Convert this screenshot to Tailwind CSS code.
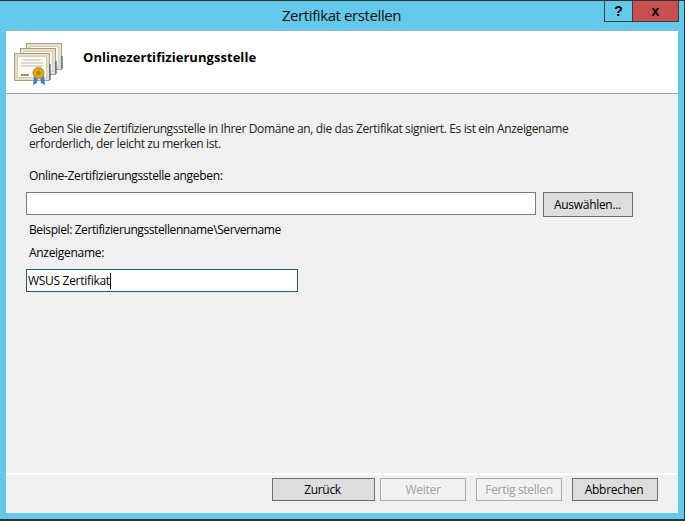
<!DOCTYPE html>
<html lang="de">
  <head>
    <meta charset="UTF-8" />
    <script src="https://cdn.jsdelivr.net/npm/@tailwindcss/browser@4"></script>
    <title>Zertifikat erstellen</title>
  </head>
  <body class="w-[685px] h-[521px] overflow-hidden bg-[#63c9ea] font-['Open_Sans','Liberation_Sans',sans-serif] text-[12px] leading-[16px] text-black">
    <div class="flex flex-col h-full border-t border-t-[#333] border-b-2 border-b-[#333] border-r border-r-[#333]">
      <!-- title bar -->
      <div class="relative h-[29px] shrink-0 flex justify-center items-center">
        <span class="text-[15px] tracking-[-0.4px] text-[#111] -mt-[2px] pr-[1px]">Zertifikat erstellen</span>
        <div class="absolute top-0 right-[5px] flex h-[21px] border border-t-0 border-[#3a3f44]">
          <div class="w-[28px] flex items-center justify-center border-r border-[#3a3f44] font-['Liberation_Sans'] font-bold text-[14px]">?</div>
          <div class="w-[45px] bg-[#c75050] flex items-center justify-center font-['Liberation_Sans'] font-bold text-[14px]">x</div>
        </div>
      </div>
      <!-- dialog -->
      <div class="flex-1 ml-[6px] mr-[6px] mb-[6px] flex flex-col bg-[#f0f0f0] border-t border-t-[#9fb4bd]">
        <div class="h-[63px] shrink-0 bg-white border-b border-[#a0a0a0] flex items-start">
          <svg class="ml-[8px] mt-[11px]" width="50" height="44" viewBox="0 0 50 44">
            <g stroke="#a89f8a" stroke-width="1">
              <rect x="12.5" y="1.5" width="35" height="26" fill="#e9e0cb" />
              <rect x="15.5" y="4.5" width="29" height="20" fill="#f9f6ec" stroke="#d8cfb9" />
              <rect x="6.5" y="6.5" width="35" height="26" fill="#e9e0cb" />
              <rect x="9.5" y="9.5" width="29" height="20" fill="#f9f6ec" stroke="#d8cfb9" />
            </g>
            <path d="M48 14v13M42 19v13" stroke="#3b5a96" stroke-width="1.2" />
            <rect x="0.5" y="11.5" width="35" height="27" fill="#e6dcc4" stroke="#a89f8a" />
            <rect x="3.5" y="14.5" width="29" height="21" fill="#fcfaf3" stroke="#d8cfb9" />
            <path d="M9 18h18M7 21h22M7 24h22" stroke="#bdb8a8" stroke-width="1" />
            <path d="M7 33h8" stroke="#77726a" stroke-width="1.5" />
            <path d="M36 22v16" stroke="#2f5ea8" stroke-width="1.2" />
            <path d="M20 34l-1 9 4-2 1-6zM26 35l1 6 4 2-1-9z" fill="#3f7ed6" />
            <circle cx="24.5" cy="31" r="5.5" fill="#dcaa1e" stroke="#b3860f" />
            <circle cx="24.5" cy="31" r="2.2" fill="#b3860f" />
          </svg>
          <div class="ml-[19px] mt-[18px] font-bold text-[13px] tracking-[0.05px]">Onlinezertifizierungsstelle</div>
        </div>
        <div class="flex-1 pl-[23px] pr-[44px] pt-[27px]">
          <p class="w-[560px] text-[#222] tracking-[-0.37px] leading-[15px]">Geben Sie die Zertifizierungsstelle in Ihrer Domäne an, die das Zertifikat signiert. Es ist ein Anzeigename erforderlich, der leicht zu merken ist.</p>
          <div class="mt-[17px] tracking-[-0.32px]">Online-Zertifizierungsstelle angeben:</div>
          <div class="mt-[8px] flex items-start">
            <input class="w-[510px] h-[23px] -ml-[3px] bg-white border border-[#7a7a7a] outline-none" />
            <button class="ml-[7px] w-[90px] h-[25px] pr-[1px] bg-[#dddddd] border border-[#707070] tracking-[-0.3px]">Auswählen...</button>
          </div>
          <div class="mt-[5px] tracking-[-0.4px]">Beispiel: Zertifizierungsstellenname\Servername</div>
          <div class="mt-[7px] tracking-[-0.3px]">Anzeigename:</div>
          <div class="mt-[8px] -ml-[3px] w-[272px] h-[23px] bg-white border border-[#1f5a8a] flex items-center pl-[1px] tracking-[-0.3px]">WSUS Zertifikat<span class="w-px h-[16px] bg-black"></span></div>
        </div>
        <div class="h-[40px] shrink-0 border-t-2 border-white flex justify-end pt-[3px] pr-[20px]">
          <button class="w-[103px] h-[23px] pr-[2px] bg-[#dddddd] border border-[#707070] tracking-[-0.3px]">Zurück</button>
          <button class="ml-[5px] w-[86px] h-[23px] bg-[#f2f2f2] border border-[#adadad] text-[#a0a0a0] tracking-[-0.3px]">Weiter</button>
          <button class="ml-[10px] w-[86px] h-[23px] bg-[#f2f2f2] border border-[#adadad] text-[#a0a0a0] tracking-[-0.3px]">Fertig stellen</button>
          <button class="ml-[10px] w-[86px] h-[23px] pr-[2px] bg-[#dddddd] border border-[#707070] tracking-[-0.3px]">Abbrechen</button>
        </div>
      </div>
    </div>
  </body>
</html>
